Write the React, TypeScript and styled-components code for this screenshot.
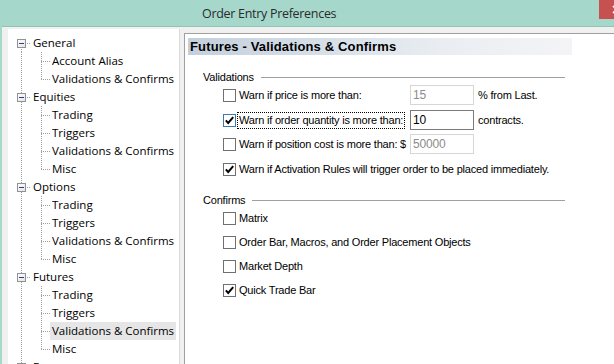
import React from "react";
import styled, { createGlobalStyle } from "styled-components";

const GlobalStyle = createGlobalStyle`
  html, body {
    margin: 0;
    padding: 0;
    background: #f0f0f0;
    overflow: hidden;
  }
  #root {
    width: 614px;
    height: 364px;
  }
`;

const FORM_FONT = `"Liberation Sans", Arial, sans-serif`;
const UI_FONT = `"Open Sans", "Noto Sans", "Liberation Sans", sans-serif`;

const dotV = "repeating-linear-gradient(to bottom, #a0a0a0 0 1px, transparent 1px 2px)";
const dotH = "repeating-linear-gradient(to right, #a0a0a0 0 1px, transparent 1px 2px)";

type VLine = "full" | "top" | "bottom" | "none";

const Window = styled.div`
  width: 614px;
  height: 364px;
  overflow: hidden;
  box-sizing: border-box;
  display: flex;
  flex-direction: column;
  border-left: 2px solid #a6d7cb;
  background: #f0f0f0;
`;

const TitleBar = styled.div`
  flex: 0 0 26px;
  display: flex;
  align-items: flex-start;
  background: #a6d7cb;
  border-bottom: 1px solid #93c2b6;
`;

const Title = styled.div`
  padding: 4px 0 0 200px;
  font-family: ${UI_FONT};
  font-size: 12.5px;
  letter-spacing: -0.3px;
  line-height: 19px;
  color: #2b2b2b;
  white-space: nowrap;
`;

const CloseBtn = styled.div`
  flex: 0 0 34px;
  height: 19px;
  margin-left: auto;
  margin-right: -19px;
  background: #c75050;
  display: flex;
  align-items: center;
  justify-content: center;
`;

const Body = styled.div`
  flex: 1;
  min-height: 0;
  display: flex;
  align-items: stretch;
`;

// *Tree
const TreePanel = styled.div`
  flex: 0 0 172px;
  margin: 2px 0 0 6px;
  padding-top: 5px;
  box-sizing: border-box;
  background: #fff;
  border-right: 1px solid #dadada;
  overflow: hidden;
  font-family: ${UI_FONT};
  font-size: 11.5px;
  color: #000;
`;

const TreeRow = styled.div`
  display: flex;
  height: 18px;
  align-items: stretch;
`;

const Gutter = styled.span<{ $w: number; $x: number; $v: VLine; $h?: boolean }>`
  flex: 0 0 ${(p) => p.$w}px;
  box-sizing: border-box;
  padding: 5px 0 0 9px;
  background-repeat: no-repeat;
  background-image: ${(p) =>
    [p.$v !== "none" ? dotV : null, p.$h ? dotH : null].filter(Boolean).join(", ") || "none"};
  background-position: ${(p) =>
    [
      p.$v !== "none" ? `${p.$x}px ${p.$v === "bottom" ? 9 : 0}px` : null,
      p.$h ? `${p.$x}px 9px` : null,
    ]
      .filter(Boolean)
      .join(", ") || "0 0"};
  background-size: ${(p) =>
    [
      p.$v !== "none" ? `1px ${p.$v === "full" ? 18 : 9}px` : null,
      p.$h ? `${p.$w - p.$x}px 1px` : null,
    ]
      .filter(Boolean)
      .join(", ") || "auto"};
`;

const NodeLabel = styled.span<{ $selected?: boolean }>`
  padding: 0 2px;
  line-height: 18px;
  white-space: nowrap;
  background: ${(p) => (p.$selected ? "#e6e6e6" : "transparent")};
`;

const Expander = () => (
  <svg width="9" height="9" viewBox="0 0 9 9" style={{ display: "block" }}>
    <defs>
      <linearGradient id="exp" x1="0" y1="0" x2="1" y2="1">
        <stop offset="0" stopColor="#ffffff" />
        <stop offset="1" stopColor="#e2e2e2" />
      </linearGradient>
    </defs>
    <rect x="0.5" y="0.5" width="8" height="8" fill="url(#exp)" stroke="#929292" />
    <path d="M2 4.5h5" stroke="#27408b" strokeWidth="1" />
  </svg>
);

// *Right side
const Panel = styled.div`
  flex: 1;
  min-width: 0;
  overflow: hidden;
  margin: 6px 0 0 4px;
  background: #fff;
  border-top: 1px solid #a0a0a0;
  border-left: 1px solid #a0a0a0;
  font-family: ${FORM_FONT};
  font-size: 11px;
  letter-spacing: -0.2px;
  color: #000;
`;

const Header = styled.div`
  width: 384px;
  height: 17px;
  margin: 4px 0 0 3px;
  padding-left: 2px;
  box-sizing: border-box;
  background: linear-gradient(to right, #c3d0dc 0%, #d6dfe8 35%, #e9edf2 65%, #f4f4f6 100%);
  font-family: "Liberation Sans", Arial, sans-serif;
  font-weight: bold;
  font-size: 13px;
  letter-spacing: 0.15px;
  line-height: 17px;
  white-space: nowrap;
`;

const GroupHead = styled.div<{ $top: number }>`
  width: 362px;
  height: 16px;
  margin: ${(p) => p.$top}px 0 0 18px;
  display: flex;
  align-items: center;
`;

const GroupLabel = styled.span`
  line-height: 16px;
  white-space: nowrap;
`;

const Rule = styled.span`
  flex: 1;
  height: 1px;
  margin-left: 7px;
  background: #a0a0a0;
`;

const ValidGrid = styled.div`
  margin-left: 38px;
  display: grid;
  grid-template-columns: 15px 172px 68px auto;
  grid-template-rows: 25px 24px 25px 20px;
  align-items: start;
`;

const Cell = styled.div<{ $span?: boolean }>`
  height: 20px;
  display: flex;
  align-items: center;
  grid-column: ${(p) => (p.$span ? "2 / -1" : "auto")};
`;

const ConfirmList = styled.div`
  margin-left: 38px;
  display: flex;
  flex-direction: column;
  gap: 4px;
`;

const ConfirmRow = styled.div`
  height: 20px;
  display: flex;
  align-items: center;
`;

const BoxSt = styled.span<{ $focus?: boolean }>`
  flex: 0 0 13px;
  width: 13px;
  height: 13px;
  box-sizing: border-box;
  border: 1px solid ${(p) => (p.$focus ? "#3d7bad" : "#707070")};
  background: #fff;
  display: flex;
  align-items: center;
  justify-content: center;
  margin-right: 2px;
`;

const Label = styled.span<{ $focus?: boolean }>`
  padding: 0 1px;
  line-height: 15px;
  white-space: nowrap;
  outline: ${(p) => (p.$focus ? "1px dotted #000" : "none")};
  outline-offset: 0;
`;

const Field = styled.input<{ $dim?: boolean }>`
  width: 64px;
  height: 20px;
  box-sizing: border-box;
  margin: 0;
  padding: 0 2px;
  border: 1px solid ${(p) => (p.$dim ? "#d6d6d6" : "#7a7a7a")};
  border-radius: 0;
  background: #fff;
  font-family: ${FORM_FONT};
  font-size: 12px;
  letter-spacing: -0.2px;
  color: ${(p) => (p.$dim ? "#8c8c8c" : "#000")};
  outline: none;
`;

const Suffix = styled.span`
  white-space: nowrap;
`;

const Check = ({ checked, focus }: { checked?: boolean; focus?: boolean }) => (
  <BoxSt $focus={focus}>
    {checked && (
      <svg width="11" height="11" viewBox="0 0 11 11">
        <path d="M1.8 5.4 L4.2 7.9 L9.2 2.2" fill="none" stroke="#000" strokeWidth="2" />
      </svg>
    )}
  </BoxSt>
);

interface TreeNode {
  label: string;
  children: string[];
  selected?: number;
}

const subItems = ["Trading", "Triggers", "Validations & Confirms", "Misc"];

const tree: TreeNode[] = [
  { label: "General", children: ["Account Alias", "Validations & Confirms"] },
  { label: "Equities", children: subItems },
  { label: "Options", children: subItems },
  { label: "Futures", children: subItems, selected: 2 },
  // only its top edge shows under the window's bottom
  { label: "Forex", children: [] },
];

const confirms = [
  { label: "Matrix", checked: false },
  { label: "Order Bar, Macros, and Order Placement Objects", checked: false },
  { label: "Market Depth", checked: false },
  { label: "Quick Trade Bar", checked: true },
];

const App = () => {
  return (
    <Window>
      <GlobalStyle />
      <TitleBar>
        <Title>Order Entry Preferences</Title>
        <CloseBtn>
          <svg width="9" height="9" viewBox="0 0 9 9">
            <path d="M1 1 L8 8 M8 1 L1 8" stroke="#fff" strokeWidth="1.6" />
          </svg>
        </CloseBtn>
      </TitleBar>
      <Body>
        <TreePanel>
          {tree.map((node, i) => (
            <div key={node.label}>
              <TreeRow>
                <Gutter $w={23} $x={13} $v={i === 0 ? "bottom" : "full"} $h>
                  <Expander />
                </Gutter>
                <NodeLabel>{node.label}</NodeLabel>
              </TreeRow>
              {node.children.map((child, j) => (
                <TreeRow key={child + j}>
                  <Gutter $w={23} $x={13} $v="full" />
                  <Gutter $w={19} $x={10} $v={j === node.children.length - 1 ? "top" : "full"} $h />
                  <NodeLabel $selected={node.selected === j}>{child}</NodeLabel>
                </TreeRow>
              ))}
            </div>
          ))}
        </TreePanel>

        <Panel>
          <Header>Futures - Validations &amp; Confirms</Header>

          <GroupHead $top={14}>
            <GroupLabel>Validations</GroupLabel>
            <Rule />
          </GroupHead>
          <ValidGrid>
            <Cell>
              <Check />
            </Cell>
            <Cell>
              <Label>Warn if price is more than:</Label>
            </Cell>
            <Cell>
              <Field $dim readOnly value="15" />
            </Cell>
            <Cell>
              <Suffix>% from Last.</Suffix>
            </Cell>

            <Cell>
              <Check checked focus />
            </Cell>
            <Cell>
              <Label $focus>Warn if order quantity is more than:</Label>
            </Cell>
            <Cell>
              <Field readOnly value="10" />
            </Cell>
            <Cell>
              <Suffix>contracts.</Suffix>
            </Cell>

            <Cell>
              <Check />
            </Cell>
            <Cell>
              <Label>Warn if position cost is more than: $</Label>
            </Cell>
            <Cell>
              <Field $dim readOnly value="50000" />
            </Cell>
            <Cell />

            <Cell>
              <Check checked />
            </Cell>
            <Cell $span>
              <Label>Warn if Activation Rules will trigger order to be placed immediately.</Label>
            </Cell>
          </ValidGrid>

          <GroupHead $top={13}>
            <GroupLabel>Confirms</GroupLabel>
            <Rule />
          </GroupHead>
          <ConfirmList>
            {confirms.map((c) => (
              <ConfirmRow key={c.label}>
                <Check checked={c.checked} />
                <Label>{c.label}</Label>
              </ConfirmRow>
            ))}
          </ConfirmList>
        </Panel>
      </Body>
    </Window>
  );
};

export default App;
